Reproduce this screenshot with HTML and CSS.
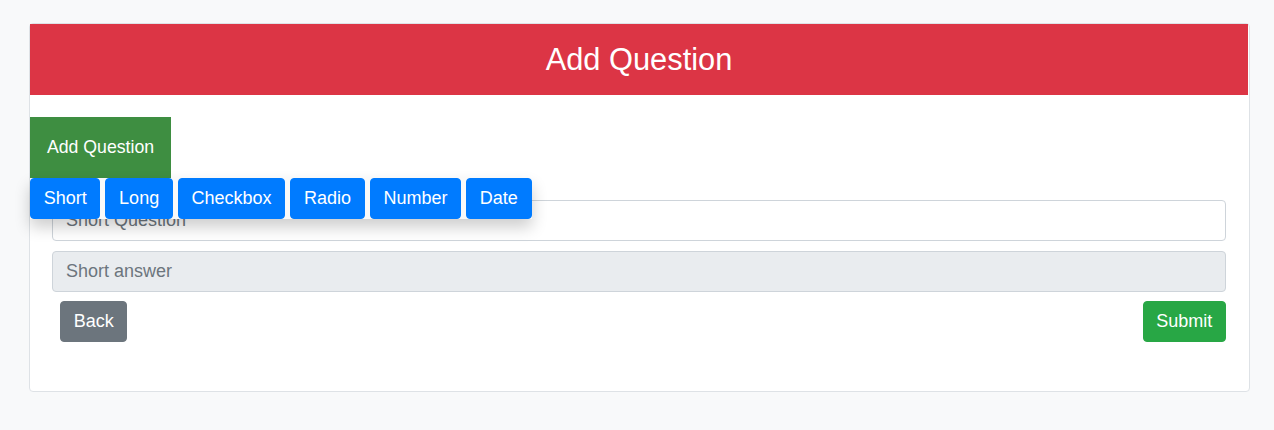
FILE: index.html
```html
<!DOCTYPE html>
<html>
<head>
<meta charset="utf-8">
<link rel="stylesheet" href="styles.css">
</head>
<body>
<div class="page">
  <div class="card">
    <div class="card-header">Add Question</div>
    <div class="toolbar">
      <div class="dropdown">
        <button class="dropbtn">Add Question</button>
        <div class="dropdown-content"><button class="btn btn-primary">Short</button> <button class="btn btn-primary">Long</button> <button class="btn btn-primary">Checkbox</button> <button class="btn btn-primary">Radio</button> <button class="btn btn-primary">Number</button> <button class="btn btn-primary">Date</button></div>
      </div>
    </div>
    <form class="form">
      <input class="form-control" type="text" placeholder="Short Question">
      <input class="form-control" type="text" placeholder="Short answer" disabled>
      <div class="actions">
        <button type="button" class="btn btn-secondary back">Back</button>
        <button type="button" class="btn btn-success">Submit</button>
      </div>
    </form>
  </div>
</div>
</body>
</html>
```

FILE: styles.css
```css
* { box-sizing: border-box; }
html, body { margin: 0; padding: 0; }
body {
  background: #f8f9fa;
  font-family: "Liberation Sans", Arial, sans-serif;
  font-size: 18px;
  line-height: 1.5;
  color: #212529;
}
.page { padding: 23px 24px 0 29px; }
.card {
  background: #fff;
  border: 1px solid #dee2e6;
  border-radius: 4px;
  height: 369px;
  width: 1221px;
}
.card-header {
  background: #dc3545;
  color: #fff;
  text-align: center;
  font-size: 30.8px;
  line-height: 71px;
  height: 71px;
  margin-right: 1px;
}
.toolbar { padding-top: 22px; }
.dropdown { position: relative; display: inline-block; vertical-align: top; }
.dropbtn {
  display: block;
  background: #3e8e41;
  color: #fff;
  border: none;
  font-family: inherit;
  font-size: 17.7px;
  line-height: 27px;
  padding: 17px 0;
  width: 141px;
  text-align: center;
  cursor: pointer;
}
.dropdown-content {
  position: absolute;
  top: 100%;
  left: 0;
  z-index: 1;
  background: #f9f9f9;
  box-shadow: 0 8px 16px 0 rgba(0,0,0,0.2);
  white-space: nowrap;
  font-size: 18px;
  line-height: 0;
}
.btn {
  display: inline-block;
  font-family: inherit;
  font-size: 18px;
  line-height: 27px;
  padding: 6px 12.7px;
  border: 1px solid transparent;
  border-radius: 4px;
  color: #fff;
  vertical-align: top;
  cursor: pointer;
}
.btn-primary { background: #007bff; border-color: #007bff; }
.btn-secondary { background: #6c757d; border-color: #6c757d; }
.btn-success { background: #28a745; border-color: #28a745; }
.form { padding: 22px 23px 0 22px; display: flex; flex-direction: column; }
.form-control {
  display: block;
  width: 100%;
  height: 41px;
  padding: 6px 13px;
  font-family: inherit;
  font-size: 18px;
  line-height: 27px;
  color: #495057;
  background: #fff;
  border: 1px solid #ced4da;
  border-radius: 4px;
  margin-bottom: 10px;
}
.form-control::placeholder { color: #6c757d; opacity: 1; }
.form-control:disabled { background: #e9ecef; }
.actions {
  display: flex;
  justify-content: space-between;
  margin-top: -1px;
}
.back { margin-left: 8px; }
```
